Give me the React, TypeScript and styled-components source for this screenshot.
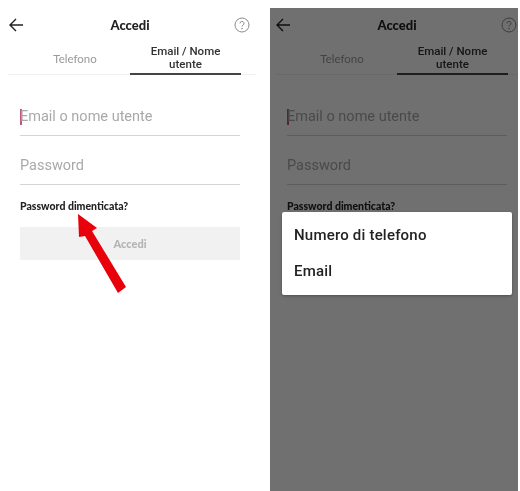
import { createGlobalStyle, styled } from "styled-components";

const GlobalStyle = createGlobalStyle`
  html, body {
    margin: 0;
    padding: 0;
    background: #fff;
  }
  body {
    font-family: "Lato", "Liberation Sans", sans-serif;
    color: #222;
  }
`;

const Page = styled.div`
  display: flex;
  width: 520px;
  height: 491px;
  overflow: hidden;
  background: #fff;
`;

const LightPanel = styled.div`
  width: 270px;
  flex: none;
`;

const DarkPanel = styled.div`
  position: relative;
  width: 248px;
  margin-top: 8px;
  flex: none;
  overflow: hidden;
`;

const DarkContent = styled.div`
  width: 270px;
  margin: -8px 0 0 -3px;
`;

const Scrim = styled.div`
  position: absolute;
  inset: 0;
  background: rgba(0, 0, 0, 0.56);
`;

const Screen = styled.div`
  width: 260px;
  filter: blur(0.3px);
`;

const Header = styled.header`
  height: 39px;
  padding: 11px 10px 0 8px;
  box-sizing: border-box;
  display: flex;
  align-items: center;
  justify-content: space-between;
`;

const Title = styled.h1`
  margin: 0 0 0 2px;
  font-size: 13px;
  font-weight: 900;
  color: #222;
`;

const Tabs = styled.div`
  margin: 0 4px 0 8px;
  height: 35px;
  display: grid;
  grid-template-columns: 122px 111px;
  border-bottom: 1px solid #f0f0f0;
`;

const Tab = styled.div<{ $active?: boolean }>`
  display: flex;
  align-items: center;
  justify-content: center;
  padding: 4px 0 0 ${({ $active }) => ($active ? 0 : 12)}px;
  text-align: center;
  font-family: ${({ $active }) => ($active ? '"Roboto", sans-serif' : '"Lato", sans-serif')};
  font-size: 11.5px;
  line-height: 13px;
  font-weight: ${({ $active }) => ($active ? 500 : 400)};
  color: ${({ $active }) => ($active ? "#333" : "#999")};
  border-bottom: ${({ $active }) => ($active ? "2px solid #444" : "2px solid transparent")};
  margin-bottom: -1px;
`;

const Form = styled.div`
  padding: 21px 20px 0;
  width: 220px;
`;

const Field = styled.div`
  height: 37px;
  padding-top: 2px;
  margin-bottom: 9px;
  display: flex;
  align-items: center;
  border-bottom: 1px solid #d4d4d4;
  font-family: "Roboto", sans-serif;
  font-size: 14.5px;
  color: #a9a9a9;
`;

const Caret = styled.span`
  width: 2px;
  height: 16px;
  margin-right: -2px;
  background: #c2557c;
`;

const Forgot = styled.div`
  margin-top: 15px;
  font-size: 10.5px;
  line-height: 13px;
  font-weight: 900;
  color: #222;
`;

const SubmitButton = styled.div`
  margin-top: 14px;
  height: 33px;
  display: flex;
  align-items: center;
  justify-content: center;
  background: #f1f1f1;
  font-size: 11px;
  font-weight: 900;
  color: #b3b3b3;
`;

const Dialog = styled.div`
  position: absolute;
  left: 12px;
  top: 204px;
  width: 230px;
  height: 83px;
  padding-top: 5px;
  box-sizing: border-box;
  background: #fff;
  border-radius: 2px;
  box-shadow: 0 1px 3px rgba(0, 0, 0, 0.3);
  filter: blur(0.3px);
`;

const DialogItem = styled.div`
  height: 36px;
  padding-left: 12px;
  display: flex;
  align-items: center;
  font-family: "Roboto", sans-serif;
  font-size: 15px;
  font-weight: 500;
  letter-spacing: 0.2px;
  color: #222;
`;

const ArrowMark = styled.svg`
  position: absolute;
  left: 70px;
  top: 208px;
`;

const BackIcon = () => (
  <svg width="16" height="14" viewBox="0 0 16 14" fill="none" stroke="#222" strokeWidth="1.4">
    <path d="M15 7H2M8 1 2 7l6 6" />
  </svg>
);

const HelpIcon = () => (
  <svg width="16" height="16" viewBox="0 0 16 16" fill="none" stroke="#8a8a8a" strokeWidth="1">
    <circle cx="8" cy="8" r="7" />
    <path d="M6 6.4a2 2 0 1 1 3 1.7c-.7.4-1 .8-1 1.5" />
    <circle cx="8" cy="11.6" r=".4" />
  </svg>
);

const LoginScreen = () => (
  <Screen>
    <Header>
      <BackIcon />
      <Title>Accedi</Title>
      <HelpIcon />
    </Header>
    <Tabs>
      <Tab>Telefono</Tab>
      <Tab $active>
        Email / Nome
        <br />
        utente
      </Tab>
    </Tabs>
    <Form>
      <Field>
        <Caret />
        Email o nome utente
      </Field>
      <Field>Password</Field>
      <Forgot>Password dimenticata?</Forgot>
      <SubmitButton>Accedi</SubmitButton>
    </Form>
  </Screen>
);

export default function App() {
  return (
    <Page>
      <GlobalStyle />
      <LightPanel>
        <LoginScreen />
      </LightPanel>
      <DarkPanel>
        <DarkContent>
          <LoginScreen />
        </DarkContent>
        <Scrim />
        <Dialog>
          <DialogItem>Numero di telefono</DialogItem>
          <DialogItem>Email</DialogItem>
        </Dialog>
      </DarkPanel>
      <ArrowMark width="60" height="90" viewBox="70 208 60 90">
        <path d="M78 214 97 228 92 231 126 287 118 293 85 236 79 237Z" fill="#e8000b" />
      </ArrowMark>
    </Page>
  );
}
